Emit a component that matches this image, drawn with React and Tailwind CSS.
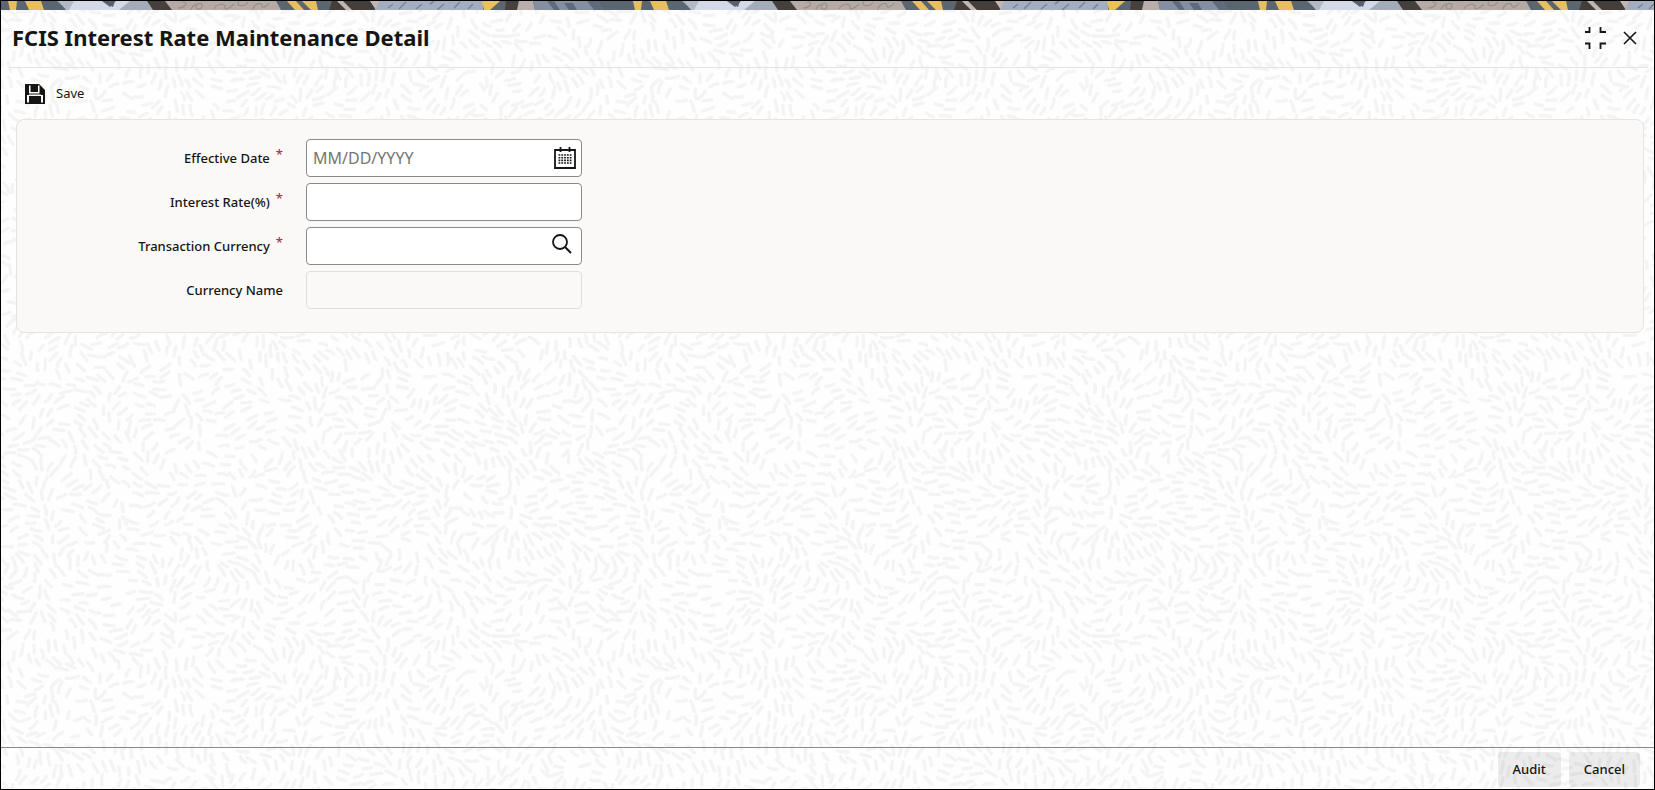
import { useState } from "react";

const TILE = 600;
const TAU = Math.PI * 2;

// small deterministic random so the texture never changes between renders
function createRandom(seed) {
  let s = seed;
  return () => {
    s = (s * 16807) % 2147483647;
    return s / 2147483647;
  };
}

// the field repeats every TILE pixels, so the tiles join without a seam
function angleAt(x, y) {
  const k = TAU / TILE;
  return (
    1.1 +
    1.1 * Math.sin(k * (3 * x + 2 * y) + 1) +
    1.0 * Math.cos(k * (4 * y - 3 * x)) +
    0.6 * Math.sin(k * (6 * x - y) + 2) +
    0.5 * Math.cos(k * (5 * x + 6 * y))
  );
}

function wrap(d) {
  return d - TILE * Math.round(d / TILE);
}

function buildStrokes() {
  const random = createRandom(4711);
  const placed = [];
  for (let i = 0; i < 18000; i++) {
    const x = random() * TILE;
    const y = random() * TILE;
    const angle = angleAt(x, y) + (random() - 0.5) * 0.3;
    const cos = Math.cos(angle);
    const sin = Math.sin(angle);
    const blocked = placed.some((p) => {
      const dx = wrap(p.x - x);
      const dy = wrap(p.y - y);
      const along = (dx * cos + dy * sin) / 14;
      const across = (dy * cos - dx * sin) / 6;
      return along * along + across * across < 1;
    });
    if (!blocked) placed.push({ x, y, cos, sin, half: 3.5 + random() * 2.5 });
  }

  const out = [];
  for (const p of placed) {
    const dx = p.cos * p.half;
    const dy = p.sin * p.half;
    const bend = (random() - 0.5) * 3;
    // strokes on an edge are repeated on the opposite one
    const xs = p.x < 8 ? [0, TILE] : p.x > TILE - 8 ? [0, -TILE] : [0];
    const ys = p.y < 8 ? [0, TILE] : p.y > TILE - 8 ? [0, -TILE] : [0];
    for (const ox of xs) {
      for (const oy of ys) {
        const x = p.x + ox;
        const y = p.y + oy;
        const [x1, y1, cx, cy, x2, y2] = [
          x - dx,
          y - dy,
          x - p.sin * bend,
          y + p.cos * bend,
          x + dx,
          y + dy,
        ].map((n) => n.toFixed(1));
        out.push(`M${x1} ${y1}Q${cx} ${cy} ${x2} ${y2}`);
      }
    }
  }
  return out.join("");
}

const STROKES = buildStrokes();

function Texture() {
  return (
    <svg
      className="absolute inset-0 -z-10 h-full w-full"
      aria-hidden="true"
    >
      <defs>
        <pattern
          id="texture"
          width={TILE}
          height={TILE}
          patternUnits="userSpaceOnUse"
        >
          <path
            d={STROKES}
            fill="none"
            stroke="#f4f4f4"
            strokeWidth="3.4"
            strokeLinecap="round"
          />
        </pattern>
      </defs>
      <rect width="100%" height="100%" fill="url(#texture)" />
    </svg>
  );
}

function Banner() {
  return (
    <svg className="block h-[9px] w-full" aria-hidden="true">
      <defs>
        <pattern
          id="banner"
          width="625"
          height="9"
          patternUnits="userSpaceOnUse"
        >
          <rect width="625" height="9" fill="#5b6671" />
          <path d="M7 0h9l-1 9H9zM24 0h16l3 9H28z" fill="#e6bf60" />
          <path d="M56 0h23l9 9H66z" fill="#a4abb9" />
          <path d="M58 0h18l-6 9h-5z" fill="#b3bac6" />
          <path d="M73 0h28l8 6 6-6h18l-9 9H68z" fill="#d3d9e6" />
          <path d="M101 0h13l-2 6z" fill="#566170" />
          <path d="M129 0h19l6 9h-36z" fill="#a4abb9" />
          <path d="M146 0h19l8 9h-21z" fill="#46403c" />
          <path d="M164 0h111l5 9H171z" fill="#b5aaa5" />
          <path
            d="M181 1c8 0 2 6-4 6M190 9c1-6 12-9 11-4s-8 4-5-1M213 8c2-5 12-7 11-2-1 4 5 1 9-3M238 0c-4 6 6 6 9 1M252 9c0-6 9-9 9-4 0 3 5 0 7-3"
            fill="none"
            stroke="#989089"
            strokeWidth="1.2"
          />
          <path d="M286 0h9l8 9h-9zM301 0h14l2 9h-7z" fill="#e6bf60" />
          <path d="M331 0h48l-6 9h-45z" fill="#443e3b" />
          <path d="M336 0h6l9 9h-6zM369 0h10l-4 9z" fill="#c0b6b2" />
          <path d="M379 0h103v9H374z" fill="#a5aec0" />
          <path
            d="M392 3l-5 4M405 1l-7 7M421 3l-6 5M433 0l-4 3M443 3l-7 6M459 1l-6 6M472 3l-5 5"
            stroke="#7b8597"
            strokeWidth="1.6"
          />
          <path d="M481 0h18l-10 9h-6z" fill="#e9c25c" />
          <path d="M505 0h13l-2 9h-12z" fill="#47413d" />
          <path d="M518 0h14l2 9h-18z" fill="#b9aeaa" />
          <path d="M532 0h64l6 9h-68z" fill="#868fa1" />
          <path
            d="M546 0h7l6 9h-6zM563 2h9l4 7h-8zM586 0h10l6 9h-9z"
            fill="#5f6b7c"
          />
        </pattern>
      </defs>
      <rect width="100%" height="9" fill="url(#banner)" />
    </svg>
  );
}

function CollapseIcon() {
  return (
    <svg width="22" height="22" viewBox="0 0 22 22" fill="none" aria-hidden="true">
      <path
        d="M1 5h4.500V0M16.500 0v5H22M1 16.500h4.500V22M16.500 22v-5.500H22"
        stroke="#161513"
        strokeWidth="1.8"
      />
    </svg>
  );
}

function CloseIcon() {
  return (
    <svg width="14" height="14" viewBox="0 0 14 14" fill="none" aria-hidden="true">
      <path d="M1 1l12 12M13 1L1 13" stroke="#161513" strokeWidth="1.6" />
    </svg>
  );
}

function SaveIcon() {
  return (
    <svg width="20" height="20" viewBox="0 0 20 20" aria-hidden="true">
      <path d="M0 0h14l6 6v14H0z" fill="#161513" />
      <path d="M4 1.500h1.500V8H13V1.500h1.500v8H4zM2 11h2v7.500H2zM16 11h2v7.500h-2zM4 10.500h12V12H4z" fill="#fff" />
    </svg>
  );
}

function CalendarIcon() {
  return (
    <svg width="22" height="22" viewBox="0 0 22 22" fill="none" aria-hidden="true">
      <path d="M1 3h20v18H1zM6.500 0v5M15.500 0v5" stroke="#161513" strokeWidth="1.8" />
      <path
        d="M4.500 8h13M4.500 10.700h13M4.500 13.400h13M4.500 16h13"
        stroke="#161513"
        strokeWidth="1.6"
        strokeDasharray="1.8 1"
      />
    </svg>
  );
}

function SearchIcon() {
  return (
    <svg width="20" height="20" viewBox="0 0 20 20" fill="none" aria-hidden="true">
      <circle cx="8" cy="8" r="7" stroke="#161513" strokeWidth="1.8" />
      <path d="M13 13l6 6" stroke="#161513" strokeWidth="2" />
    </svg>
  );
}

const fields = [
  {
    id: "effectiveDate",
    label: "Effective Date",
    required: true,
    placeholder: "MM/DD/YYYY",
    action: "Open calendar",
    icon: CalendarIcon,
    iconClass: "right-1.5",
  },
  { id: "interestRate", label: "Interest Rate(%)", required: true },
  {
    id: "transactionCurrency",
    label: "Transaction Currency",
    required: true,
    action: "Search currency",
    icon: SearchIcon,
    iconClass: "right-2.5 pb-1",
  },
  { id: "currencyName", label: "Currency Name", disabled: true },
];

function Field({ field, value, onChange }) {
  const Icon = field.icon;
  return (
    <div className="flex items-center gap-[23px]">
      <label
        htmlFor={field.id}
        className="flex w-[266px] justify-end gap-1.5 text-[13px] leading-5 font-medium"
      >
        {field.label}
        {field.required && (
          <span className="-mt-1 font-normal text-[#a3262b]" aria-hidden="true">
            *
          </span>
        )}
      </label>
      <div className="relative w-[276px]">
        <input
          id={field.id}
          type="text"
          value={value}
          onChange={(e) => onChange(field.id, e.target.value)}
          placeholder={field.placeholder}
          disabled={field.disabled}
          required={field.required}
          className="block h-[38px] w-full rounded border border-[#8b8987] bg-white px-1.5 text-base placeholder:text-[#757575] disabled:border-[#e1dfdd] disabled:bg-[#faf9f8]"
        />
        {Icon && (
          <button
            type="button"
            aria-label={field.action}
            className={`absolute inset-y-0 flex items-center ${field.iconClass}`}
          >
            <Icon />
          </button>
        )}
      </div>
    </div>
  );
}

export default function App() {
  const [values, setValues] = useState({});

  function handleChange(id, value) {
    setValues((prev) => ({ ...prev, [id]: value }));
  }

  return (
    <div className="relative isolate flex min-h-screen flex-col border border-black bg-[#fefefe] font-['Noto_Sans',sans-serif] text-[#161513]">
      <Texture />
      <Banner />

      <header className="mr-1.5 ml-2 flex h-[58px] items-center justify-between border-b border-[#e4e3e2] pr-[11px] pb-0.5 pl-[3px]">
        <h1 className="text-[22px] font-bold">
          FCIS Interest Rate Maintenance Detail
        </h1>
        <div className="flex items-center gap-[17px]">
          <button type="button" aria-label="Collapse">
            <CollapseIcon />
          </button>
          <button type="button" aria-label="Close">
            <CloseIcon />
          </button>
        </div>
      </header>

      <div className="flex h-[51px] items-center pl-6">
        <button type="button" className="flex items-center gap-[11px] text-[13px]">
          <SaveIcon />
          Save
        </button>
      </div>

      <main className="flex-1 pr-2.5 pl-[15px]">
        <form
          className="flex flex-col gap-1.5 rounded-lg border border-[#e6e4e2] bg-[#faf9f8] pt-[19px] pb-[23px]"
          onSubmit={(e) => e.preventDefault()}
        >
          {fields.map((field) => (
            <Field
              key={field.id}
              field={field}
              value={values[field.id] || ""}
              onChange={handleChange}
            />
          ))}
        </form>
      </main>

      <footer className="flex justify-end gap-2 border-t border-[#8b8987] pt-1 pr-3.5 pb-0.5 text-[13px] font-medium">
        <button type="button" className="h-[35px] rounded bg-black/7 px-[15px]">
          Audit
        </button>
        <button type="button" className="h-[35px] rounded bg-black/7 px-[15px]">
          Cancel
        </button>
      </footer>
    </div>
  );
}
